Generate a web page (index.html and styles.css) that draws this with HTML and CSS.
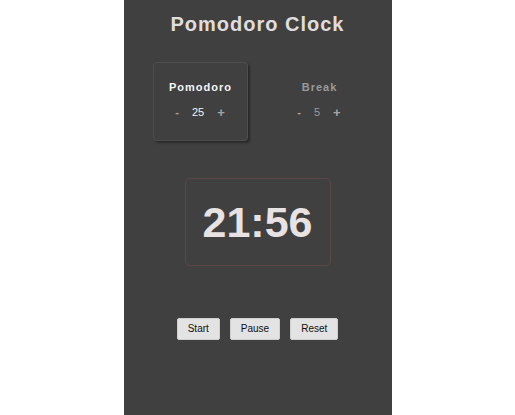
FILE: index.html
```html
<!DOCTYPE html>
<html>
<head>
<meta charset="utf-8">
<link rel="stylesheet" href="styles.css">
</head>
<body>
<main class="app">
  <h1 class="title">Pomodoro Clock</h1>
  <section class="settings">
    <div class="setting active">
      <div class="setting-label">Pomodoro</div>
      <div class="stepper">
        <span class="step minus">-</span>
        <span class="value">25</span>
        <span class="step plus">+</span>
      </div>
    </div>
    <div class="setting">
      <div class="setting-label">Break</div>
      <div class="stepper">
        <span class="step minus">-</span>
        <span class="value">5</span>
        <span class="step plus">+</span>
      </div>
    </div>
  </section>
  <section class="timer">
    <div class="time">21:56</div>
  </section>
  <section class="controls">
    <button class="btn">Start</button>
    <button class="btn">Pause</button>
    <button class="btn">Reset</button>
  </section>
</main>
</body>
</html>
```
FILE: styles.css
```css
html, body {
  margin: 0;
  padding: 0;
  background: #ffffff;
  height: 100%;
}
body {
  font-family: "Liberation Sans", Arial, sans-serif;
}
.app {
  width: 268px;
  height: 415px;
  margin: 0 auto;
  background: #404040;
  display: flex;
  flex-direction: column;
  align-items: center;
}
.title {
  margin: 13px 0 0;
  font-size: 20px;
  line-height: 23px;
  font-weight: bold;
  letter-spacing: 1px;
  color: #e0dddd;
}
.settings {
  margin-top: 26px;
  display: flex;
  gap: 24px;
  padding-left: 4px;
}
.setting {
  width: 95px;
  height: 79px;
  box-sizing: border-box;
  border-radius: 4px;
  border: 1px solid transparent;
  display: flex;
  flex-direction: column;
  align-items: center;
  padding-top: 18px;
}
.setting.active {
  border-color: #4e4e4e;
  box-shadow: 2px 2px 2px #2a2a2a;
}
.setting-label {
  font-size: 11px;
  line-height: 13px;
  font-weight: bold;
  letter-spacing: 1px;
  color: #9a9a9a;
  padding-left: 1px;
}
.setting.active .setting-label {
  color: #f4f4f4;
}
.stepper {
  margin-top: 12px;
  display: flex;
  align-items: center;
  gap: 13px;
  font-size: 11px;
  line-height: 13px;
}
.step {
  color: #a4a4a4;
  font-weight: bold;
}
.step.plus {
  font-size: 13px;
}
.value {
  color: #9a9a9a;
}
.setting.active .value {
  color: #f4f4f4;
}
.timer {
  margin-top: 37px;
  width: 146px;
  height: 88px;
  box-sizing: border-box;
  border: 1px solid #5c4646;
  border-radius: 5px;
  display: flex;
  align-items: center;
  justify-content: center;
}
.time {
  font-size: 43px;
  line-height: 48px;
  font-weight: bold;
  color: #e8e2e2;
}
.controls {
  margin-top: 52px;
  display: flex;
  gap: 10px;
}
.btn {
  font-family: "Liberation Sans", Arial, sans-serif;
  font-size: 10px;
  line-height: 14px;
  height: 22px;
  padding: 3px 10px;
  background: #e3e3e3;
  color: #111;
  border: 1px solid #cfcfcf;
  border-radius: 2px;
}
```
